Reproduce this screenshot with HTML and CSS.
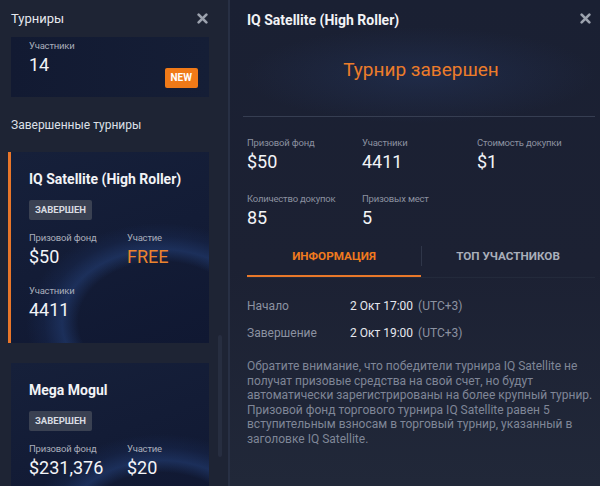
FILE: index.html
```html
<!DOCTYPE html>
<html lang="ru">
<head>
<meta charset="utf-8">
<title>Турниры</title>
<link rel="stylesheet" href="styles.css">
</head>
<body>
<div class="app">
  <aside class="left">
    <div class="panel-head">
      <span class="panel-title">Турниры</span>
      <svg class="close" viewBox="0 0 10 10"><path d="M1.5 1.5L8.5 8.5M8.5 1.5L1.5 8.5"/></svg>
    </div>
    <div class="scroll">
      <div class="card card-top">
        <div class="stat">
          <div class="s-label">Участники</div>
          <div class="s-value">14</div>
        </div>
        <span class="new">NEW</span>
      </div>
      <div class="section-title">Завершенные турниры</div>
      <div class="card card-active">
        <div class="card-title">IQ Satellite (High Roller)</div>
        <span class="badge">ЗАВЕРШЕН</span>
        <div class="card-grid">
          <div class="stat">
            <div class="s-label">Призовой фонд</div>
            <div class="s-value">$50</div>
          </div>
          <div class="stat">
            <div class="s-label">Участие</div>
            <div class="s-value orange">FREE</div>
          </div>
          <div class="stat">
            <div class="s-label">Участники</div>
            <div class="s-value">4411</div>
          </div>
        </div>
      </div>
      <div class="card">
        <div class="card-title">Mega Mogul</div>
        <span class="badge">ЗАВЕРШЕН</span>
        <div class="card-grid">
          <div class="stat">
            <div class="s-label">Призовой фонд</div>
            <div class="s-value">$231,376</div>
          </div>
          <div class="stat">
            <div class="s-label">Участие</div>
            <div class="s-value">$20</div>
          </div>
        </div>
      </div>
      <div class="thumb"></div>
    </div>
  </aside>
  <main class="right">
    <div class="panel-head right-head">
      <span class="detail-title">IQ Satellite (High Roller)</span>
      <svg class="close" viewBox="0 0 10 10"><path d="M1.5 1.5L8.5 8.5M8.5 1.5L1.5 8.5"/></svg>
    </div>
    <div class="hero">Турнир завершен</div>
    <div class="divider"></div>
    <div class="stats">
      <div class="stat">
        <div class="s-label">Призовой фонд</div>
        <div class="s-value">$50</div>
      </div>
      <div class="stat">
        <div class="s-label">Участники</div>
        <div class="s-value">4411</div>
      </div>
      <div class="stat">
        <div class="s-label">Стоимость докупки</div>
        <div class="s-value">$1</div>
      </div>
      <div class="stat">
        <div class="s-label">Количество докупок</div>
        <div class="s-value">85</div>
      </div>
      <div class="stat">
        <div class="s-label">Призовых мест</div>
        <div class="s-value">5</div>
      </div>
    </div>
    <div class="tabs">
      <div class="tab active">ИНФОРМАЦИЯ</div>
      <div class="tab">ТОП УЧАСТНИКОВ</div>
    </div>
    <div class="info">
      <div class="info-row"><span class="i-label">Начало</span><span class="i-val">2 Окт 17:00</span><span class="i-tz">(UTC+3)</span></div>
      <div class="info-row"><span class="i-label">Завершение</span><span class="i-val">2 Окт 19:00</span><span class="i-tz">(UTC+3)</span></div>
    </div>
    <p class="note">Обратите внимание, что победители турнира IQ Satellite не получат призовые средства на свой счет, но будут автоматически зарегистрированы на более крупный турнир. Призовой фонд торгового турнира IQ Satellite равен 5 вступительным взносам в торговый турнир, указанный в заголовке IQ Satellite.</p>
  </main>
</div>
</body>
</html>
```
FILE: styles.css
```css
* { box-sizing: border-box; }
html, body {
  margin: 0;
  padding: 0;
  width: 600px;
  height: 486px;
  overflow: hidden;
  background: #1c2132;
  font-family: Roboto, "Noto Sans", "Liberation Sans", sans-serif;
  color: #eef0f4;
}
.app {
  display: flex;
  width: 600px;
  height: 486px;
}
.left {
  width: 230px;
  flex: none;
  background: #1e2434;
  border-right: 2px solid #283044;
  display: flex;
  flex-direction: column;
  overflow: hidden;
}
.panel-head {
  height: 37px;
  flex: none;
  display: flex;
  align-items: center;
  justify-content: space-between;
  padding: 0 20px 0 11px;
}
.panel-title {
  font-size: 13px;
  color: #e6e8ee;
}
.close {
  width: 11px;
  height: 11px;
  fill: none;
  stroke: #9ca2ae;
  stroke-width: 2.4;
  stroke-linecap: round;
}
.scroll {
  position: relative;
  flex: 1;
  overflow: hidden;
  padding: 0 19px 0 11px;
}
.card {
  background:
    radial-gradient(ellipse 150px 110px at 150px 170px, transparent 55%, rgba(38, 68, 128, 0.5) 66%, rgba(30, 55, 110, 0.22) 78%, transparent 90%),
    linear-gradient(160deg, #16203a 0%, #101832 100%);
  padding: 18px 18px 22px 18px;
  margin-bottom: 20px;
}
.card-top {
  display: flex;
  justify-content: space-between;
  align-items: flex-end;
  padding: 2px 11px 9px 18px;
  background: linear-gradient(90deg, #121a32 0%, #151e36 100%);
}
.card-top .stat { margin-bottom: 12px; }
.new {
  background: #f07a18;
  color: #fff;
  font-weight: 700;
  font-size: 10px;
  height: 20px;
  line-height: 20px;
  padding: 0 6px;
  border-radius: 2px;
}
.section-title {
  font-size: 12px;
  line-height: 16px;
  color: #dde0e7;
  margin: 20px 0 19px 0;
}
.card-active {
  margin-left: -3px;
  border-left: 3px solid #e8762a;
}
.card-title {
  font-size: 14px;
  line-height: 18px;
  font-weight: 700;
  color: #f2f3f6;
  margin-bottom: 12px;
}
.badge {
  display: block;
  width: fit-content;
  background: #3a4152;
  color: #d8dbe2;
  font-weight: 700;
  font-size: 9.5px;
  height: 20px;
  line-height: 20px;
  padding: 0 6px;
  border-radius: 2px;
  margin-bottom: 11px;
}
.card-grid {
  display: grid;
  grid-template-columns: 98px auto;
  row-gap: 16px;
}
.s-label {
  font-size: 9.5px;
  letter-spacing: -0.2px;
  line-height: 13px;
  color: #a9aebb;
}
.s-value {
  font-size: 18px;
  line-height: 22px;
  margin-top: 2px;
  color: #f3f4f7;
}
.orange { color: #ec842e; }
.thumb {
  position: absolute;
  left: 218px;
  top: 298px;
  width: 4px;
  height: 122px;
  background: #272e40;
  border-radius: 2px;
}
.right {
  flex: 1;
  display: flex;
  flex-direction: column;
  background:
    radial-gradient(ellipse 220px 60px at 190px 75px, rgba(40, 62, 110, 0.35), transparent 80%),
    linear-gradient(180deg, #1a2033 0%, #1c2133 55%, #212839 100%);
  padding: 0 5px 0 17px;
}
.right-head {
  padding: 0 4px 0 0;
}
.detail-title {
  font-size: 14px;
  font-weight: 700;
  color: #f2f3f6;
  padding-top: 2px;
}
.hero {
  text-align: center;
  font-size: 19px;
  line-height: 22px;
  color: #ec7c2a;
  margin: 22px 0 0 0;
}
.divider {
  height: 1px;
  background: #363e52;
  margin: 35px 0 0 -4px;
}
.stats {
  display: grid;
  grid-template-columns: 115px 115px auto;
  row-gap: 19px;
  margin-top: 19px;
}
.stats .s-label { color: #8b91a0; }
.tabs {
  display: flex;
  margin-top: 17px;
  width: 348px;
  border-bottom: 1px solid #232a3b;
}
.tab {
  flex: 1;
  text-align: center;
  font-size: 11.7px;
  font-weight: 700;
  color: #a9aeba;
  height: 29px;
  line-height: 20px;
  position: relative;
}
.tab + .tab::before {
  content: "";
  position: absolute;
  left: 0;
  top: 0;
  width: 1px;
  height: 20px;
  background: #2f3649;
}
.tab.active {
  color: #f07a1e;
  border-bottom: 2px solid #e8782a;
  height: 31px;
}
.info {
  display: flex;
  flex-direction: column;
  gap: 11px;
  margin-top: 20px;
}
.info-row {
  display: flex;
  font-size: 12px;
  line-height: 16px;
}
.i-label {
  width: 103px;
  color: #8c92a1;
}
.i-val {
  color: #e6e8ee;
  margin-right: 5px;
}
.i-tz {
  color: #8c92a1;
}
.note {
  margin: 18px 0 0 0;
  width: 346px;
  font-size: 12px;
  line-height: 14.5px;
  color: #7f8697;
}
```
